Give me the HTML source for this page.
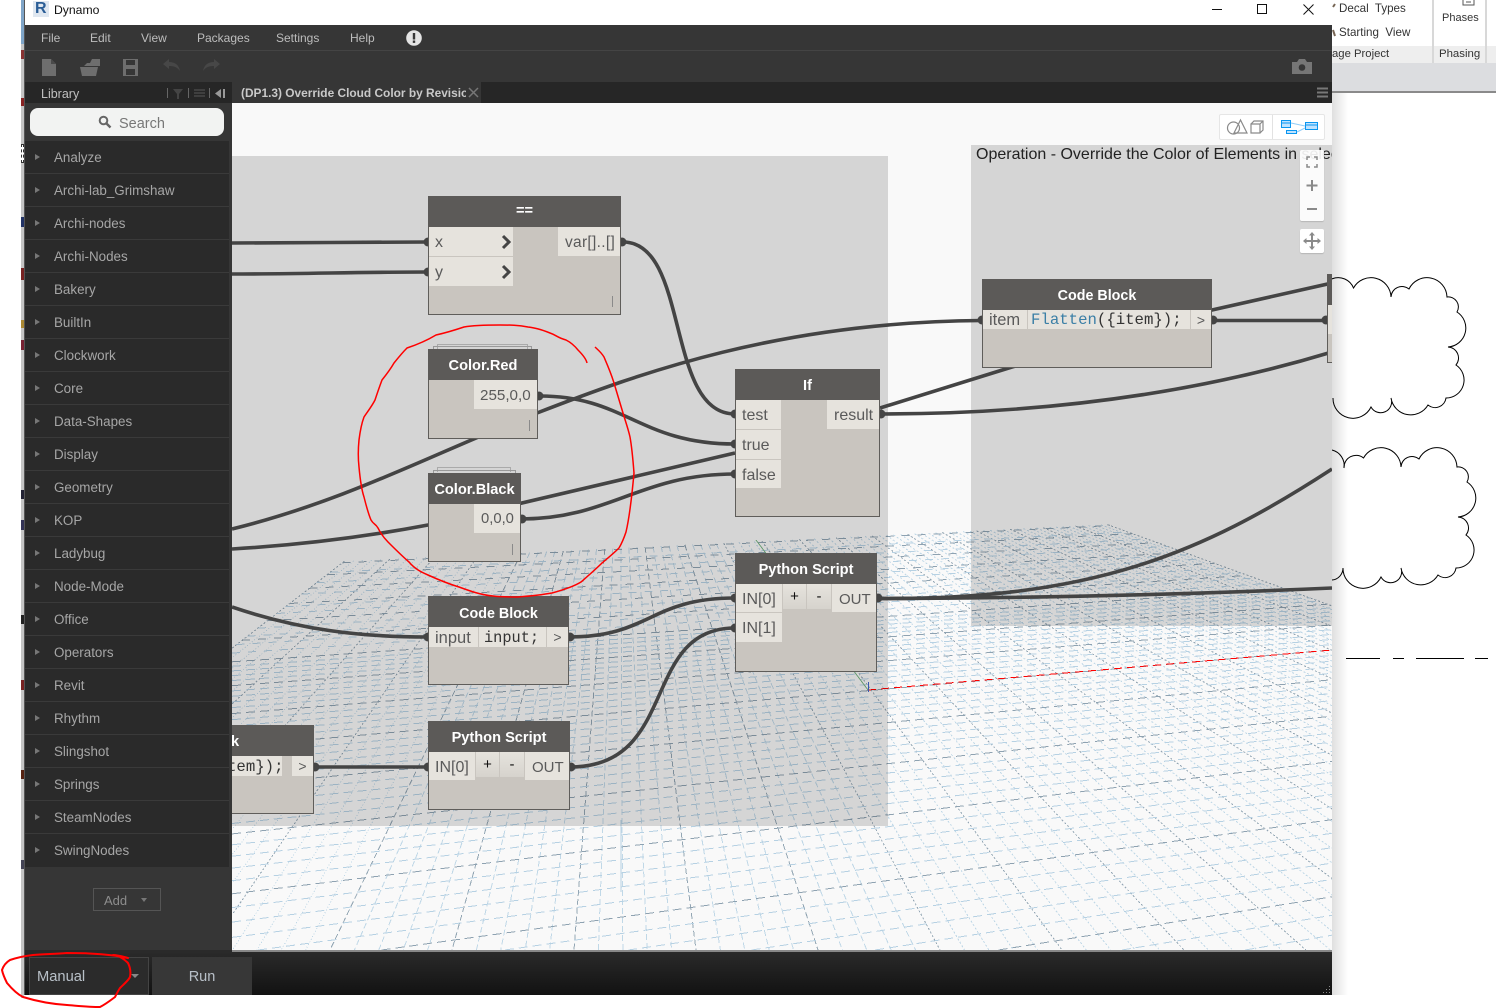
<!DOCTYPE html>
<html><head><meta charset="utf-8"><title>Dynamo</title>
<style>
html,body{margin:0;padding:0;background:#fff;height:1008px;overflow:hidden}
body{position:relative;width:1496px;font-family:"Liberation Sans","DejaVu Sans",sans-serif}
div{box-sizing:border-box}
.a,.t,.p,.h,.n{position:absolute}
.t{white-space:nowrap}
.n{background:#c9c5bf;border:1px solid #5f5d5a}
.h{background:#5c5a58;color:#fff;font-weight:bold;font-size:14.6px;text-align:center;line-height:35px;white-space:nowrap;overflow:hidden}
.p{background:#e6e3dd;color:#5a5a5a;font-size:16px;line-height:31px;white-space:nowrap;overflow:hidden}
.m{font-family:"Liberation Mono",monospace;font-size:15.7px;color:#333}
.tick{position:absolute;background:#8a8a8a;width:1px;height:11px}
.r{position:absolute;left:25px;width:204px;height:33px;background:#2a2a2a;border-bottom:1px solid #3a3a3a;color:#a6a6a6;font-size:13.4px;line-height:34px;padding-left:29px}
.r:before{content:"";position:absolute;left:10px;top:13px;border-left:5px solid #777;border-top:3.5px solid transparent;border-bottom:3.5px solid transparent}
.mn{position:absolute;top:31px;color:#bdbdbd;font-size:12px;white-space:nowrap}
.rb{position:absolute;color:#333;font-size:11.6px;white-space:nowrap}
</style></head>
<body>

<!-- Revit behind, right -->
<div class="a" style="left:1332px;top:0;width:164px;height:46px;background:#fff"></div>
<div class="a" style="left:1332px;top:46px;width:164px;height:17px;background:#eeeeee"></div>
<div class="a" style="left:1332px;top:63px;width:164px;height:29px;background:#dcdde0"></div>
<div class="a" style="left:1332px;top:91px;width:164px;height:2px;background:#8a8a8a"></div>
<div class="a" style="left:1432px;top:0;width:2px;height:63px;background:#d8d8d8"></div>
<div class="a" style="left:1485px;top:0;width:2px;height:63px;background:#d8d8d8"></div>
<div class="rb" style="left:1339px;top:2px">Decal&nbsp; Types</div>
<div class="rb" style="left:1339px;top:26px">Starting&nbsp; View</div>
<div class="rb" style="left:1332px;top:48px;font-size:11.3px">age Project</div>
<div class="rb" style="left:1442px;top:12px;font-size:11px">Phases</div>
<div class="rb" style="left:1439px;top:48px;font-size:11.400px">Phasing</div>
<svg class="a" style="left:1332px;top:0" width="164" height="60"><path d="M131 0v5h11V0M134 2h5" fill="none" stroke="#555"/><path d="M1 7l2-3M1 30l2 6" stroke="#765" stroke-width="2" fill="none"/></svg>
<svg class="a" style="left:0;top:0" width="1496" height="1008">
<g fill="none" stroke="#000" stroke-width="1">
<path d="M1323 300A13 13 0 0 1 1353.500 288A20 20 0 0 1 1391 297A11 11 0 0 1 1409 289A20 20 0 0 1 1447 297A10 10 0 0 1 1457 312A19 19 0 0 1 1448 347A11 11 0 0 1 1456 365A18 18 0 0 1 1446 398A11 11 0 0 1 1428 405A20 20 0 0 1 1391 398A11 11 0 0 1 1371 407A20 20 0 0 1 1333 398"/>
<path d="M1344 468A12 12 0 0 1 1363.500 458A20 20 0 0 1 1401 467A11 11 0 0 1 1419 459A20 20 0 0 1 1457 467A10 10 0 0 1 1467 482A19 19 0 0 1 1458 517A11 11 0 0 1 1466 535A18 18 0 0 1 1456 568A11 11 0 0 1 1438 575A20 20 0 0 1 1401 568A11 11 0 0 1 1381 577A20 20 0 0 1 1343 568A12 12 0 0 1 1332 580"/>
<path d="M1332 450A16 16 0 0 1 1344 468"/>
<path d="M1346 658.500H1380M1393 658.500H1404M1416 658.500H1464M1475 658.500H1488"/>
</g></svg>
<div class="a" style="left:1332px;top:93px;width:16px;height:902px;background:linear-gradient(90deg,rgba(0,0,0,.13),rgba(0,0,0,0))"></div>

<!-- Revit behind, left strip -->
<div class="a" style="left:21px;top:0;width:3px;height:998px;background:#c4c4c4"></div>
<div class="a" style="left:21px;top:0;width:3px;height:44px;background:#7fa5c8"></div>
<div class="a" style="left:21px;top:50px;width:3px;height:9px;background:#833"></div>
<div class="a" style="left:21px;top:98px;width:3px;height:8px;background:#822"></div>
<div class="a" style="left:21px;top:144px;width:3px;height:19px;background:#fff;border:1px dashed #333"></div>
<div class="a" style="left:21px;top:217px;width:3px;height:10px;background:#236"></div>
<div class="a" style="left:21px;top:268px;width:3px;height:12px;background:#722"></div>
<div class="a" style="left:21px;top:320px;width:3px;height:8px;background:#a83"></div>
<div class="a" style="left:21px;top:340px;width:3px;height:10px;background:#723"></div>
<div class="a" style="left:21px;top:490px;width:3px;height:9px;background:#223"></div>
<div class="a" style="left:21px;top:520px;width:3px;height:10px;background:#335"></div>
<div class="a" style="left:21px;top:615px;width:3px;height:9px;background:#222"></div>
<div class="a" style="left:21px;top:680px;width:3px;height:10px;background:#722"></div>
<div class="a" style="left:21px;top:770px;width:3px;height:9px;background:#521"></div>
<div class="a" style="left:21px;top:860px;width:3px;height:9px;background:#445"></div>

<!-- Window -->
<div class="a" style="left:24px;top:0;width:1308px;height:995px;background:#363636"></div>
<div class="a" style="left:24px;top:0;width:1px;height:995px;background:#555;z-index:5"></div>
<div class="a" style="left:25px;top:0;width:1307px;height:25px;background:#fff"></div>
<div class="a" style="left:33px;top:1px;width:16px;height:16px;background:#dfe7f0"></div>
<div class="t" style="left:35px;top:0;font-size:16px;font-weight:bold;color:#2a5d96;line-height:18px">R</div>
<div class="t" style="left:54px;top:3px;font-size:12.2px;color:#111">Dynamo</div>
<svg class="a" style="left:1200px;top:0" width="132" height="25"><g fill="none" stroke="#111" stroke-width="1"><path d="M12 9.500H22"/><rect x="57.500" y="4.500" width="9" height="9"/><path d="M103.500 4.500l10 10M113.500 4.500l-10 10"/></g></svg>

<div class="mn" style="left:41px">File</div>
<div class="mn" style="left:90px">Edit</div>
<div class="mn" style="left:141px">View</div>
<div class="mn" style="left:197px">Packages</div>
<div class="mn" style="left:276px">Settings</div>
<div class="mn" style="left:350px">Help</div>
<svg class="a" style="left:406px;top:30px" width="16" height="16"><circle cx="8" cy="8" r="7.800" fill="#e4e4e4"/><rect x="6.800" y="3" width="2.400" height="6.500" fill="#363636"/><rect x="6.800" y="10.500" width="2.400" height="2.400" fill="#363636"/></svg>
<div class="a" style="left:25px;top:50px;width:1307px;height:1px;background:#444"></div>

<svg class="a" style="left:25px;top:51px" width="1307" height="31">
<path d="M17 8h9l5 5v12H17z" fill="#6e6e6e"/><path d="M26 8l5 5h-5z" fill="#4a4a4a"/>
<path d="M59 15l3-3h3l2-4h8v7z" fill="#6e6e6e"/><path d="M55 16h18l-2 9H57z" fill="#6e6e6e"/>
<path d="M98 8h15v17H98z M101 9v5h9V9z M101 18v6h9v-6z" fill="#6e6e6e" fill-rule="evenodd"/>
<path d="M138 13l6-5v3c6 0 10 3 11 9-3-4-6-5-11-5v3z" fill="#474747"/>
<path d="M195 13l-6-5v3c-6 0-10 3-11 9 3-4 6-5 11-5v3z" fill="#474747"/>
<path d="M1267 11h5l2-3h6l2 3h5v12h-20z" fill="#767676"/><circle cx="1277" cy="16.500" r="3.300" fill="#363636"/>
</svg>

<!-- Library tab bar -->
<div class="a" style="left:25px;top:82px;width:1307px;height:21px;background:#262626"></div>
<div class="t" style="left:41px;top:87px;font-size:12.500px;color:#c0c0c0">Library</div>
<svg class="a" style="left:160px;top:84px" width="70" height="19">
<g fill="#666"><rect x="7" y="4" width="1" height="10"/><rect x="28" y="4" width="1" height="10"/><rect x="49" y="4" width="1" height="10"/></g>
<path d="M13 5h10l-4 5v5h-2v-5z" fill="#444"/><path d="M34 5h11v2H34zM34 8h11v2H34zM34 11h11v2H34z" fill="#3f3f3f"/>
<path d="M61 5v9l-6-4.500z" fill="#999"/><rect x="63" y="5" width="2" height="9" fill="#999"/>
</svg>
<div class="a" style="left:232px;top:82px;width:249px;height:21px;background:#363636"></div>
<div class="t" style="left:241px;top:86px;width:225px;overflow:hidden;font-size:11.900px;font-weight:bold;color:#c9c9c9">(DP1.3) Override Cloud Color by Revision</div>
<svg class="a" style="left:468px;top:87px" width="11" height="11"><path d="M1 1l9 9M10 1l-9 9" stroke="#777" stroke-width="1.500"/></svg>
<svg class="a" style="left:1316px;top:87px" width="13" height="12"><path d="M1 1.500h11M1 5.500h11M1 9.500h11" stroke="#777" stroke-width="2"/></svg>

<!-- Sidebar -->
<div class="a" style="left:25px;top:103px;width:207px;height:38px;background:#363636"></div>
<div class="a" style="left:30px;top:108px;width:194px;height:28px;background:#f2f3f2;border-radius:8px"></div>
<svg class="a" style="left:98px;top:115px" width="14" height="14"><circle cx="5.500" cy="5.500" r="3.800" fill="none" stroke="#666" stroke-width="2"/><path d="M8.500 8.500l4 4" stroke="#666" stroke-width="2.400"/></svg>
<div class="t" style="left:119px;top:116px;font-size:14.500px;color:#777">Search</div>
<div class="a" style="left:25px;top:141px;width:204px;height:725px;background:#2a2a2a"></div>
<div class="r" style="top:141px">Analyze</div>
<div class="r" style="top:174px">Archi-lab_Grimshaw</div>
<div class="r" style="top:207px">Archi-nodes</div>
<div class="r" style="top:240px">Archi-Nodes</div>
<div class="r" style="top:273px">Bakery</div>
<div class="r" style="top:306px">BuiltIn</div>
<div class="r" style="top:339px">Clockwork</div>
<div class="r" style="top:372px">Core</div>
<div class="r" style="top:405px">Data-Shapes</div>
<div class="r" style="top:438px">Display</div>
<div class="r" style="top:471px">Geometry</div>
<div class="r" style="top:504px">KOP</div>
<div class="r" style="top:537px">Ladybug</div>
<div class="r" style="top:570px">Node-Mode</div>
<div class="r" style="top:603px">Office</div>
<div class="r" style="top:636px">Operators</div>
<div class="r" style="top:669px">Revit</div>
<div class="r" style="top:702px">Rhythm</div>
<div class="r" style="top:735px">Slingshot</div>
<div class="r" style="top:768px">Springs</div>
<div class="r" style="top:801px">SteamNodes</div>
<div class="r" style="top:834px;border-bottom:0">SwingNodes</div>
<div class="a" style="left:93px;top:888px;width:68px;height:23px;border:1px solid #555"></div>
<div class="t" style="left:104px;top:893px;font-size:13px;color:#8d8d8d">Add</div>
<div class="a" style="left:141px;top:898px;border-top:4px solid #777;border-left:3px solid transparent;border-right:3px solid transparent"></div>

<!-- Canvas -->
<div class="a" style="left:232px;top:103px;width:1100px;height:847px;background:#f9f9f9;overflow:hidden">
 <div class="a" style="left:-232px;top:-103px;width:1496px;height:1008px">
  <svg id="grid" class="a" style="left:232px;top:103px" width="1100" height="847" viewBox="232 103 1100 847"></svg>
  <div class="a" style="left:232px;top:156px;width:656px;height:670px;background:rgba(0,0,0,.14)"></div>
  <div class="a" style="left:971px;top:145px;width:361px;height:481px;background:rgba(0,0,0,.14)"></div>
  <div class="t" style="left:976px;top:146px;font-size:16px;color:#222">Operation - Override the Color of Elements in selec</div>

  <svg class="a" style="left:0;top:0" width="1496" height="1008">
   <g fill="none" stroke="#444" stroke-width="3.600">
    <path d="M232 243C300 243 360 242 428 242"/>
    <path d="M232 274C300 274 360 272 428 272"/>
    <path d="M623 242C690 242 665 414 735 414"/>
    <path d="M232 529C350 500 440 450 537 413C640 373 780 322 982 320.500"/>
    <path d="M540 396C625 396 640 444 735 444"/>
    <path d="M232 549C300 545 370 536 428 525L735 453"/>
    <path d="M521 519C610 519 640 474 735 474"/>
    <path d="M880 414C1050 414 1200 392 1332 352"/>
    <path d="M880 408L1012 367L1212 310L1332 283"/>
    <path d="M1212 320.500H1332"/>
    <path d="M877 598.500C1050 598 1200 594 1332 588"/>
    <path d="M877 598.500C1090 600 1200 555 1332 469"/>
    <path d="M232 607C300 630 360 637 428 637"/>
    <path d="M569 637C650 637 650 598 735 598"/>
    <path d="M570 767C680 767 640 628 735 628"/>
    <path d="M314 767H428"/>
   </g>
   <g fill="#444">
    <circle cx="428" cy="242" r="4.500"/><circle cx="428" cy="272" r="4.500"/><circle cx="622" cy="242" r="4.500"/>
    <circle cx="539" cy="396" r="4.500"/><circle cx="522" cy="519" r="4.500"/>
    <circle cx="735" cy="414" r="4.500"/><circle cx="735" cy="444" r="4.500"/><circle cx="735" cy="474" r="4.500"/><circle cx="881" cy="414" r="4.500"/>
    <circle cx="982" cy="320" r="4.500"/><circle cx="1213" cy="320" r="4.500"/><circle cx="1326" cy="320" r="4.500"/>
    <circle cx="428" cy="637" r="4.500"/><circle cx="570" cy="637" r="4.500"/>
    <circle cx="735" cy="598" r="4.500"/><circle cx="735" cy="628" r="4.500"/><circle cx="878" cy="598" r="4.500"/>
    <circle cx="428" cy="767" r="4.500"/><circle cx="571" cy="767" r="4.500"/><circle cx="315" cy="767" r="4.500"/>
   </g>
  </svg>

  <!-- == -->
  <div class="n" style="left:428px;top:196px;width:193px;height:119px"></div>
  <div class="h" style="left:428px;top:196px;width:193px;height:31px;line-height:31px">==</div>
  <div class="p" style="left:429px;top:227px;width:84px;height:29px;padding-left:6px">x</div>
  <div class="p" style="left:429px;top:257px;width:84px;height:29px;padding-left:6px">y</div>
  <div class="p" style="left:558px;top:227px;width:62px;height:29px;padding-left:7px;font-size:15.500px;letter-spacing:.3px">var[]..[]</div>
  <svg class="a" style="left:500px;top:233px" width="14" height="50"><path d="M3 3l6 6-6 6M3 33l6 6-6 6" fill="none" stroke="#444" stroke-width="3"/></svg>
  <div class="tick" style="left:612px;top:296px"></div>

  <!-- Color.Red -->
  <div class="a" style="left:437px;top:344px;width:91px;height:5px;border:1px solid #aaa;border-bottom:0"></div>
  <div class="a" style="left:433px;top:346px;width:99px;height:3px;border:1px solid #999;border-bottom:0"></div>
  <div class="n" style="left:428px;top:349px;width:110px;height:90px"></div>
  <div class="h" style="left:428px;top:349px;width:110px;height:31px">Color.Red</div>
  <div class="p" style="left:474px;top:380px;width:63px;height:29px;padding-left:6px;font-size:15.200px">255,0,0</div>
  <div class="tick" style="left:529px;top:420px"></div>

  <!-- Color.Black -->
  <div class="a" style="left:437px;top:467px;width:74px;height:5px;border:1px solid #aaa;border-bottom:0"></div>
  <div class="a" style="left:433px;top:470px;width:83px;height:3px;border:1px solid #999;border-bottom:0"></div>
  <div class="n" style="left:428px;top:473px;width:93px;height:89px"></div>
  <div class="h" style="left:428px;top:473px;width:93px;height:31px">Color.Black</div>
  <div class="p" style="left:474px;top:504px;width:46px;height:29px;padding-left:7px;font-size:14.800px">0,0,0</div>
  <div class="tick" style="left:512px;top:544px"></div>

  <!-- If -->
  <div class="n" style="left:735px;top:369px;width:145px;height:148px"></div>
  <div class="h" style="left:735px;top:369px;width:145px;height:31px">If</div>
  <div class="p" style="left:736px;top:400px;width:45px;height:29px;padding-left:6px">test</div>
  <div class="p" style="left:736px;top:430px;width:45px;height:29px;padding-left:6px">true</div>
  <div class="p" style="left:736px;top:460px;width:45px;height:28px;padding-left:6px">false</div>
  <div class="p" style="left:827px;top:400px;width:52px;height:29px;padding-left:7px">result</div>

  <!-- Code Block top -->
  <div class="n" style="left:982px;top:279px;width:230px;height:89px"></div>
  <div class="h" style="left:982px;top:279px;width:230px;height:31px;font-size:14.300px">Code Block</div>
  <div class="p" style="left:983px;top:310px;width:44px;height:19px;padding-left:6px;line-height:21px;font-size:16.500px">item</div>
  <div class="p m" style="left:1028px;top:310px;width:162px;height:19px;padding-left:3px;line-height:21px"><span style="color:#3b7fa6">Flatten</span>({item});</div>
  <div class="p" style="left:1191px;top:310px;width:20px;height:19px;text-align:center;line-height:20px;font-size:14px">&gt;</div>

  <!-- clipped right node -->
  <div class="n" style="left:1327px;top:274px;width:10px;height:89px"></div>
  <div class="h" style="left:1327px;top:274px;width:10px;height:31px"></div>
  <div class="p" style="left:1328px;top:305px;width:10px;height:29px"></div>

  <!-- Code Block input -->
  <div class="n" style="left:428px;top:596px;width:141px;height:89px"></div>
  <div class="h" style="left:428px;top:596px;width:141px;height:31px;font-size:14.300px;line-height:36px">Code Block</div>
  <div class="p" style="left:429px;top:627px;width:49px;height:20px;padding-left:6px;line-height:22px;font-size:16.500px">input</div>
  <div class="p m" style="left:479px;top:627px;width:67px;height:20px;padding-left:5px;line-height:22px;font-size:15.300px">input;</div>
  <div class="p" style="left:547px;top:627px;width:21px;height:20px;text-align:center;line-height:21px;font-size:14px">&gt;</div>

  <!-- Python 1 -->
  <div class="n" style="left:735px;top:553px;width:142px;height:119px"></div>
  <div class="h" style="left:735px;top:553px;width:142px;height:31px">Python Script</div>
  <div class="p" style="left:736px;top:584px;width:46px;height:28px;padding-left:6px">IN[0]</div>
  <div class="p" style="left:736px;top:613px;width:46px;height:29px;padding-left:6px">IN[1]</div>
  <div class="p" style="left:783px;top:584px;width:23px;height:25px;text-align:center;line-height:26px;color:#111;font-size:15px;background:linear-gradient(#e6e3dd,#d6d3cd)">+</div>
  <div class="p" style="left:807px;top:584px;width:24px;height:25px;text-align:center;line-height:26px;color:#111;font-size:15px;background:linear-gradient(#e6e3dd,#d6d3cd)">-</div>
  <div class="p" style="left:832px;top:584px;width:44px;height:28px;padding-left:7px;font-size:15px">OUT</div>

  <!-- Python 2 -->
  <div class="n" style="left:428px;top:721px;width:142px;height:89px"></div>
  <div class="h" style="left:428px;top:721px;width:142px;height:31px">Python Script</div>
  <div class="p" style="left:429px;top:752px;width:46px;height:28px;padding-left:6px">IN[0]</div>
  <div class="p" style="left:476px;top:752px;width:23px;height:25px;text-align:center;line-height:26px;color:#111;font-size:15px;background:linear-gradient(#e6e3dd,#d6d3cd)">+</div>
  <div class="p" style="left:500px;top:752px;width:24px;height:25px;text-align:center;line-height:26px;color:#111;font-size:15px;background:linear-gradient(#e6e3dd,#d6d3cd)">-</div>
  <div class="p" style="left:525px;top:752px;width:44px;height:28px;padding-left:7px;font-size:15px">OUT</div>

  <!-- clipped k node -->
  <div class="n" style="left:200px;top:725px;width:114px;height:89px"></div>
  <div class="h" style="left:200px;top:725px;width:114px;height:31px;text-align:left;padding-left:31px">k</div>
  <div class="p m" style="left:201px;top:756px;width:81px;height:20px;line-height:22px;padding-left:26px">tem});</div>
  <div class="p" style="left:292px;top:756px;width:21px;height:20px;text-align:center;line-height:21px;font-size:14px">&gt;</div>

  <!-- overlay controls -->
  <div class="a" style="left:1219px;top:114px;width:106px;height:26px;background:#fff;border:1px solid #e6e6e6;border-radius:2px"></div>
  <svg class="a" style="left:1219px;top:114px" width="106" height="26">
   <path d="M53.500 1v24" stroke="#e2e2e2"/>
   <g fill="none" stroke="#8a8a8a" stroke-width="1.200"><circle cx="14.500" cy="14" r="6"/><path d="M15 19h13L21.500 6z"/><path d="M32 10h9v9h-9zM32 10l3-3h9v9l-3 3M41 10l3-3"/></g>
   <g fill="#bfe3ff" stroke="#0a96f0" stroke-width="1"><rect x="62.500" y="6.500" width="9" height="7"/><rect x="86.500" y="8.500" width="12" height="7"/><rect x="67.500" y="16.500" width="10" height="3"/></g>
   <path d="M62 9h10M87 11h12" stroke="#0a96f0"/><path d="M72 9l14 3M78 18l8-4" stroke="#90cdf8" fill="none"/>
  </svg>
  <div class="a" style="left:1300px;top:150px;width:24px;height:71px;background:rgba(255,255,255,.9);box-shadow:0 1px 1px rgba(0,0,0,.15);border-radius:2px"></div>
  <div class="a" style="left:1300px;top:229px;width:24px;height:24px;background:#fff;box-shadow:0 1px 1px rgba(0,0,0,.15);border-radius:2px"></div>
  <svg class="a" style="left:1300px;top:150px" width="24" height="104">
   <g fill="none" stroke="#8a8a8a" stroke-width="1.500"><path d="M7 10V7h3M14 7h3v3M17 14v3h-3M10 17H7v-3"/><path d="M12 30v11M6.500 35.500h11" stroke-width="2"/><path d="M7 59h10" stroke-width="2"/><path d="M12 85v12M6 91h12" stroke-width="2"/></g>
   <path d="M12 82l3 3.500H9zM12 100l3-3.500H9zM3 91l3.500-3v6zM21 91l-3.500-3v6z" fill="#8a8a8a"/>
  </svg>
 </div>
</div>

<!-- Bottom bar -->
<div class="a" style="left:232px;top:950px;width:1100px;height:2px;background:#888"></div>
<div class="a" style="left:25px;top:952px;width:1307px;height:43px;background:linear-gradient(#2a2a2a,#121212)"></div>
<div class="a" style="left:25px;top:950px;width:207px;height:2px;background:#2a2a2a"></div>
<div class="a" style="left:29px;top:957px;width:120px;height:38px;background:#2b2b2b;border:1px solid #444"></div>
<div class="t" style="left:37px;top:969px;font-size:14.700px;color:#b8c0c8">Manual</div>
<div class="a" style="left:131px;top:974px;border-top:4px solid #888;border-left:4px solid transparent;border-right:4px solid transparent"></div>
<div class="a" style="left:152px;top:957px;width:100px;height:38px;background:#373737"></div>
<div class="t" style="left:152px;top:969px;width:100px;text-align:center;font-size:14.500px;color:#b8c0c8">Run</div>
<svg class="a" style="left:1320px;top:985px" width="12" height="10"><path d="M9 1h1v1H9zM6 4h1v1H6zM9 4h1v1H9zM3 7h1v1H3zM6 7h1v1H6zM9 7h1v1H9z" fill="#888"/></svg>

<!-- Red hand-drawn marks -->
<svg class="a" style="left:0;top:0;z-index:9" width="1496" height="1008">
 <path fill="none" stroke="#f00" stroke-width="1.500" stroke-linejoin="round" d="M587 363C586 358 580 352 578 350C574 345 570 342 566 340C558 338 556 335 550 333C540 329 535 328 528 327C518 325 510 325 500 325C488 325 475 325 464 327C455 330 445 333 436 335C426 341 416 345 407 348C402 353 398 358 394 363C390 370 386 375 382 380C379 388 377 394 375 400C372 406 368 411 364 417C361 425 360 432 359 440C358 450 358 458 359 467C360 478 361 488 364 497C366 505 368 513 371 520C374 525 375 523 378 528C381 534 384 538 388 542C395 549 402 556 409 562C415 569 421 572 428 575C439 580 449 584 459 587C470 591 481 595 493 596C502 597 510 597 518 597C530 596 541 595 552 593C563 590 573 587 581 582C589 575 596 569 602 563C608 558 614 553 619 548C622 543 624 538 626 532C630 515 632 495 634 473C633 460 632 448 630 437C628 428 625 420 623 413C620 403 617 393 614 383C611 373 607 364 604 357C601 352 598 350 595 347"/>
 <path fill="none" stroke="#f00" stroke-width="2" stroke-linejoin="round" d="M128 958C122 957 116 956 113 955C118 955 124 957 128 958C110 954 90 953 67 953C55 954 44 954 33 955C24 956 16 958 10 960C5 963 3 967 2 970C3 975 5 979 7 983C12 989 17 994 23 997C36 1001 51 1004 67 1005C80 1006 90 1007 100 1007C106 1004 111 1000 115 997C117 993 118 991 120 988C124 984 128 981 130 977C131 972 130 967 128 963C125 960 122 958 120 957"/>
</svg>

<script>
(function(){
 var H=348,VX=620,D=4149,sL=(-158-620)/602,sR=(2282-620)/602,o=[];
 var X0=232,X1=1332,Y0=103,Y1=950;
 function clip(x1,y1,x2,y2){
  var t0=0,t1=1,dx=x2-x1,dy=y2-y1,ps=[-dx,dx,-dy,dy],qs=[x1-X0,X1-x1,y1-Y0,Y1-y1];
  for(var n=0;n<4;n++){
   if(ps[n]==0){if(qs[n]<0)return null;continue;}
   var r=qs[n]/ps[n];
   if(ps[n]<0){if(r>t1)return null;if(r>t0)t0=r;}else{if(r<t0)return null;if(r<t1)t1=r;}
  }
  return [x1+t0*dx,y1+t0*dy,x1+t1*dx,y1+t1*dy];
 }
 function ln(x1,y1,x2,y2,c,d){
  var q=clip(x1,y1,x2,y2);if(!q)return;
  o.push('<line x1="'+q[0].toFixed(1)+'" y1="'+q[1].toFixed(1)+'" x2="'+q[2].toFixed(1)+'" y2="'+q[3].toFixed(1)+'" stroke="'+c+'" stroke-dasharray="'+d+'"/>');
 }
 var k,i;
 for(k=-30;k<=70;k++){
  var s=(574+24.4*k-620)/602,v=200.05/(1+200*s/D),maj=k%5==0;
  if(maj) ln(VX+s*v,H+v,VX+s*602,950,'#93a6b4',Math.abs(s)<.5?'6 3':'2 2');
  else ln(VX+s*v,H+v,VX+s*602,950,'#c0d8e7',Math.abs(s)<.5?'6 3':(s<0?'1 2':'2 2'));
 }
 for(i=-14;i<=60;i++){
  var maj2=((i%5)+5)%5==0;
  if(!maj2&&i>30&&i%2)continue;
  if(!maj2&&i>44&&i%4)continue;
  var inv=.002004+.0000494*i,V=1/inv;
  var vl=V*4150/D/(1+V*sL/D),vr=V*4150/D/(1+V*sR/D);
  ln(VX+sL*vl,H+vl,VX+sR*vr,H+vr,maj2?'#8ea2b1':'#b6d1e3',i>30?'8 8':'9 5');
 }
 ln(868,690,1332,650,'#f00','8 5');
 o.push('<path d="M756 540L868 690" stroke="#7fb98a" fill="none"/><path d="M868.500 682V692" stroke="#4466cc"/><path d="M621 820V892" stroke="#b6d1e3"/>');
 document.getElementById('grid').innerHTML='<g stroke-width="1" shape-rendering="crispEdges" fill="none">'+o.join('')+'</g>';
})();
</script>
</body></html>
